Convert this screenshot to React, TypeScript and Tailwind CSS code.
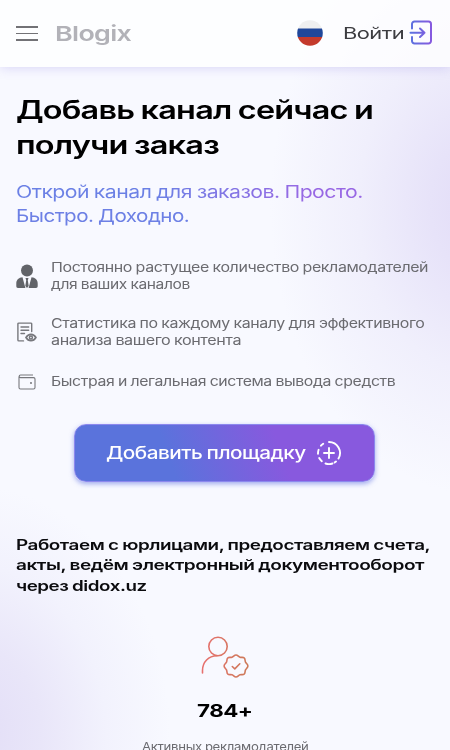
import { useLayoutEffect, useRef, useState } from "react";
import type { ReactNode } from "react";

/** One line of wide-cut lettering, stretched to the width of its box. */
function WideLine({ children, width, ink = "" }: { children: ReactNode; width: string; ink?: string }) {
  const box = useRef<HTMLSpanElement>(null);
  const text = useRef<HTMLSpanElement>(null);
  const [scale, setScale] = useState(1);
  useLayoutEffect(() => {
    if (box.current && text.current) {
      setScale(box.current.clientWidth / text.current.offsetWidth);
    }
  }, []);
  return (
    <span ref={box} className={`block whitespace-nowrap text-left tracking-[-0.025em] [word-spacing:-0.03em] ${width}`}>
      <span ref={text} className={`inline-block origin-left align-top ${ink}`} style={{ transform: `scaleX(${scale})` }}>
        {children}
      </span>
    </span>
  );
}

function LoginIcon() {
  return (
    <svg width="24" height="26" viewBox="0 0 24 26" fill="none" stroke="url(#login)" strokeWidth="2" strokeLinecap="round" strokeLinejoin="round">
      <defs>
        <linearGradient id="login" x1="0" y1="0" x2="24" y2="0" gradientUnits="userSpaceOnUse">
          <stop stopColor="#5873df" />
          <stop offset="1" stopColor="#8a57df" />
        </linearGradient>
      </defs>
      <path d="M3 8.500V4a2.500 2.500 0 0 1 2.500-2.500h14A2.500 2.500 0 0 1 22 4v17a2.500 2.500 0 0 1-2.500 2.500h-14A2.500 2.500 0 0 1 3 21v-4" />
      <path d="M1.500 12.700H15.500M11 8.500l4.500 4.200-4.500 4.300" />
    </svg>
  );
}

function FlagIcon() {
  return (
    <svg width="26" height="26" viewBox="0 0 26 26">
      <clipPath id="disc"><circle cx="13" cy="13" r="12.800" /></clipPath>
      <g clipPath="url(#disc)">
        <path fill="#f0f0f0" d="M0 0h26v9H0z" />
        <path fill="#20479a" d="M0 8.500h26v9H0z" />
        <path fill="#c43a2c" d="M0 17h26v9H0z" />
      </g>
    </svg>
  );
}

function ManagerIcon() {
  return (
    <svg width="22" height="25" viewBox="0 0 22 25" fill="#626469">
      <circle cx="11" cy="6.500" r="6" />
      <path d="M6.500 13.300 9.400 24H2C.8 24 .3 23.300.3 22v-2.500c0-3.800 2.500-5.800 6.200-6.200ZM15.500 13.300 12.600 24H20c1.200 0 1.700-.7 1.700-2v-2.500c0-3.800-2.500-5.800-6.200-6.200Z" />
      <path d="M9.500 14h3l-.7 2.300L12.700 22 11 24l-1.700-2 .9-5.700z" />
    </svg>
  );
}

function ReportIcon() {
  return (
    <svg width="20" height="21" viewBox="0 0 20 21" fill="none" stroke="#77787d" strokeWidth="1.400" strokeLinecap="round">
      <path d="M14.700 9.500V2a.9.9 0 0 0-.9-.9H1.800A.9.900 0 0 0 .9 2v16c0 .5.4.9.9.9h4.700M4 5h7.700M4 8.200h7.700M4 11.500h3.500" />
      <path strokeWidth="1.700" d="M9 15.500c2.400-4.200 7.500-4.200 9.900 0-2.400 4.200-7.500 4.200-9.900 0Z" />
      <circle cx="13.900" cy="15.500" r="1.500" strokeWidth="1.500" />
    </svg>
  );
}

function WalletIcon() {
  return (
    <svg width="18" height="16" viewBox="0 0 18 16" fill="none" stroke="#77787d" strokeWidth="1.100">
      <path d="M15 1H2.500a1.300 1.300 0 0 0 0 2.600H15.500A1.500 1.500 0 0 1 17 5.100v8.400a1.500 1.500 0 0 1-1.500 1.500h-13A1.500 1.500 0 0 1 1 13.500v-11" />
      <circle cx="13" cy="9" r=".9" fill="#66676c" stroke="none" />
    </svg>
  );
}

function PlusIcon() {
  return (
    <svg width="26" height="26" viewBox="0 0 26 26" fill="none" stroke="white" strokeWidth="1.900" strokeLinecap="round">
      <path d="M13 2A11 11 0 0 1 22.500 18.500M20 21.500A11 11 0 0 1 18.700 22.400M16.500 23.500A11 11 0 0 1 9.500 23.500M5.800 21.200A11 11 0 0 1 3.200 18M2 13.800A11 11 0 0 1 2.600 9.800M5 5.700A11 11 0 0 1 7.200 3.700M13 8v10M8 13h10" />
    </svg>
  );
}

function VerifiedUserIcon() {
  return (
    <svg width="48" height="44" viewBox="0 0 48 44" fill="none" stroke="url(#coral)" strokeWidth="1.600" strokeLinecap="round" strokeLinejoin="round">
      <defs>
        <linearGradient id="coral" x1="0" y1="0" x2="48" y2="0" gradientUnits="userSpaceOnUse">
          <stop stopColor="#e8706f" />
          <stop offset="1" stopColor="#cc7a58" />
        </linearGradient>
      </defs>
      <circle cx="17" cy="10.500" r="9.200" />
      <path d="M1.500 37v-2.500C1.500 26 7.500 19.800 16 19.700" />
      <path d="M35 19c1.800 0 2.400 1.700 4 2.200 1.600.5 3.200-.3 4.300.8s.5 2.700 1.200 4.100c.7 1.400 2.400 2.200 2.400 3.900 0 1.700-1.700 2.500-2.400 3.900-.7 1.400-.1 3-1.200 4.100s-2.700.3-4.300.8c-1.600.5-2.200 2.200-4 2.200s-2.400-1.700-4-2.200c-1.600-.5-3.200.3-4.300-.8s-.5-2.700-1.200-4.100c-.7-1.400-2.400-2.200-2.400-3.900 0-1.700 1.700-2.500 2.400-3.900.7-1.400.1-3 1.200-4.100s2.700-.3 4.300-.8c1.600-.5 2.200-2.200 4-2.200Z" />
      <path d="m31.300 30.500 2.500 2.400 5-5.100" />
    </svg>
  );
}

export default function App() {
  return (
    <div className="h-[750px] w-full overflow-hidden bg-[#f8f9ff] bg-[radial-gradient(ellipse_210px_290px_at_480px_205px,#e2dcf7_0%,#e7e3f9_24%,#f0effc_58%,transparent_100%),radial-gradient(ellipse_200px_250px_at_-30px_735px,#e2ddf7_0%,#e9e6f9_36%,#f2f2fd_68%,transparent_100%)] font-['Inter','Noto_Sans',sans-serif]">
      <header className="flex h-[67px] items-center bg-white/75 pl-4 pr-[17px] shadow-[0_1px_11px_rgba(111,91,220,0.22)]">
        <button aria-label="Меню" className="flex w-[22px] flex-col gap-[5px]">
          <span className="h-[1.500px] bg-[#727276]" />
          <span className="h-[1.500px] bg-[#727276]" />
          <span className="h-[1.500px] bg-[#727276]" />
        </button>
        <div className="ml-[17px] text-[20.500px] font-semibold leading-[26px] text-[#b2b2b8]">
          <WideLine width="w-[76px]">Blogix</WideLine>
        </div>
        <div className="ml-auto pb-px"><FlagIcon /></div>
        <div className="ml-5 mr-[5px] pb-px text-[16.500px] leading-6 text-[#3c3c40]">
          <WideLine width="w-[61px]">Войти</WideLine>
        </div>
        <div className="pb-px"><LoginIcon /></div>
      </header>

      <main className="px-4 pt-[26px]">
        <h1 className="text-[25px] font-semibold leading-[35px] text-black">
          <WideLine width="w-[357px]">Добавь канал сейчас и</WideLine>
          <WideLine width="w-[203px]">получи заказ</WideLine>
        </h1>
        <p className="mt-[17px] text-[17.500px] leading-6">
          <WideLine width="w-[347px]" ink="bg-linear-to-r from-[#6b80e5] from-40% to-[#9868e4] to-85% bg-clip-text text-transparent">
            Открой канал для заказов. Просто.
          </WideLine>
          <WideLine width="w-[173px]" ink="text-[#6d80e5]">Быстро. Доходно.</WideLine>
        </p>

        <ul className="mt-[31px] text-[13px] leading-[17px] text-[#6b6b70]">
          <li className="flex items-center">
            <span className="flex w-[35px]"><ManagerIcon /></span>
            <div>
              <WideLine width="w-[377px]">Постоянно растущее количество рекламодателей</WideLine>
              <WideLine width="w-[139px]">для ваших каналов</WideLine>
            </div>
          </li>
          <li className="mt-[22px] flex items-center">
            <span className="flex w-[35px] pl-px"><ReportIcon /></span>
            <div>
              <WideLine width="w-[374px]">Статистика по каждому каналу для эффективного</WideLine>
              <WideLine width="w-[190px]">анализа вашего контента</WideLine>
            </div>
          </li>
          <li className="mt-6 flex items-center">
            <span className="flex w-[35px] pl-[2px]"><WalletIcon /></span>
            <WideLine width="w-[345px]">Быстрая и легальная система вывода средств</WideLine>
          </li>
        </ul>

        <button className="ml-[58px] mt-[34px] flex h-[58px] w-[301px] items-center rounded-xl border border-[#8c88ee] bg-linear-[70deg,#5a73dc_32%,#8859de_68%] pl-[31px] text-[17px] font-medium text-white shadow-[0_2px_5px_rgba(88,105,222,0.55)]">
          <span className="pt-px"><WideLine width="w-[200px]">Добавить площадку</WideLine></span>
          <span className="ml-[10px]"><PlusIcon /></span>
        </button>

        <p className="mt-[53px] text-[14.500px] font-semibold leading-[20.300px] text-[#0b0b0e]">
          <WideLine width="w-[414px]">Работаем с юрлицами, предоставляем счета,</WideLine>
          <WideLine width="w-[408px]">акты, ведём электронный документооборот</WideLine>
          <WideLine width="w-[131px]">через didox.uz</WideLine>
        </p>

        <section className="mt-10 flex flex-col items-center">
          <VerifiedUserIcon />
          <div className="mt-[19px] text-[18px] font-bold leading-6 text-black">
            <WideLine width="w-[56px]">784+</WideLine>
          </div>
          <div className="mt-4 text-[12px] leading-4 text-[#6b6b70]">
            <WideLine width="w-[167px]">Активных рекламодателей</WideLine>
          </div>
        </section>
      </main>
    </div>
  );
}
